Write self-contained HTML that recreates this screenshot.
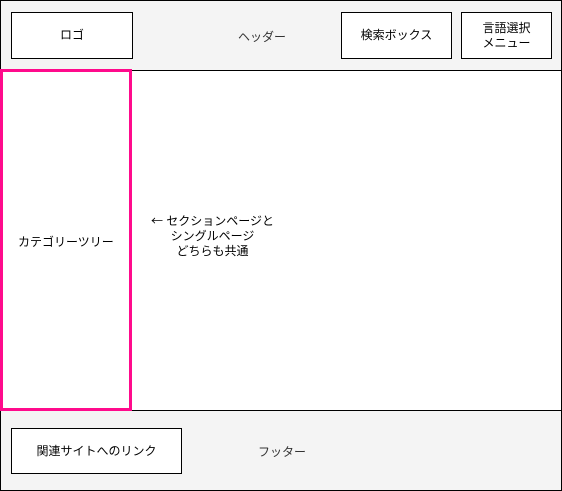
<!DOCTYPE html>
<html><head><meta charset="utf-8"><style>
*{margin:0;padding:0;box-sizing:border-box}
body{width:562px;height:491px;background:#fff;position:relative;font-family:"Liberation Sans","Noto Sans CJK JP",sans-serif;font-size:12px;color:#000;overflow:hidden}
.a{position:absolute}
.box{position:absolute;background:#fff;border:1px solid #000;display:flex;align-items:center;justify-content:center;text-align:center;line-height:15px}
.lbl{position:absolute;color:#333}
</style></head><body>
<div class="a" style="left:0;top:0;width:562px;height:71px;background:#f4f4f4;border:1px solid #000;border-bottom:1px solid #000"></div>
<div class="a" style="left:0;top:410px;width:562px;height:81px;background:#f4f4f4;border:1px solid #000"></div>
<div class="a" style="left:0;top:70px;width:1px;height:341px;background:#000"></div>
<div class="a" style="left:561px;top:70px;width:1px;height:341px;background:#000"></div>
<div class="box" style="left:11px;top:12px;width:122px;height:47px">ロゴ</div>
<div class="lbl" style="left:238px;top:28px">ヘッダー</div>
<div class="box" style="left:341px;top:12px;width:111px;height:47px">検索ボックス</div>
<div class="box" style="left:461px;top:12px;width:91px;height:47px">言語選択<br>メニュー</div>
<div class="a" style="left:0;top:69px;width:132px;height:342px;border:3px solid #ff0a8c"></div>
<div class="lbl" style="left:18px;top:233px;color:#000">カテゴリーツリー</div>
<div class="lbl" style="left:140px;top:213px;width:145px;text-align:center;color:#000;line-height:15px"><span style="font-family:'Noto Sans CJK JP',sans-serif">←</span> セクションページと<br>シングルページ<br>どちらも共通</div>
<div class="box" style="left:11px;top:428px;width:171px;height:46px">関連サイトへのリンク</div>
<div class="lbl" style="left:258px;top:443px">フッター</div>
</body></html>
